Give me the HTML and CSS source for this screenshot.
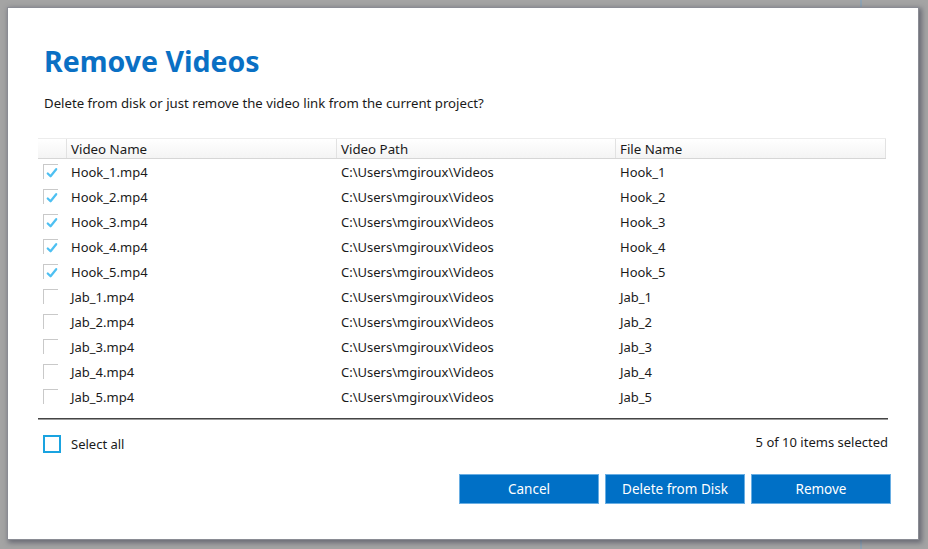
FILE: index.html
```html
<!DOCTYPE html>
<html>
<head>
<meta charset="utf-8">
<link rel="stylesheet" href="styles.css">
</head>
<body>
<div class="desk">
  <div class="guide"></div>
  <div class="dialog">
    <h1 class="title">Remove Videos</h1>
    <p class="subtitle">Delete from disk or just remove the video link from the current project?</p>
    <div class="grid">
      <div class="row head">
        <div class="cell chk"></div>
        <div class="cell">Video Name</div>
        <div class="cell">Video Path</div>
        <div class="cell">File Name</div>
      </div>
      <div class="row"><div class="cell chk"><span class="box on"><svg viewBox="0 0 16 16"><path d="M4 9 L7 12 L13 4.5"/></svg></span></div><div class="cell">Hook_1.mp4</div><div class="cell">C:\Users\mgiroux\Videos</div><div class="cell">Hook_1</div></div>
      <div class="row"><div class="cell chk"><span class="box on"><svg viewBox="0 0 16 16"><path d="M4 9 L7 12 L13 4.5"/></svg></span></div><div class="cell">Hook_2.mp4</div><div class="cell">C:\Users\mgiroux\Videos</div><div class="cell">Hook_2</div></div>
      <div class="row"><div class="cell chk"><span class="box on"><svg viewBox="0 0 16 16"><path d="M4 9 L7 12 L13 4.5"/></svg></span></div><div class="cell">Hook_3.mp4</div><div class="cell">C:\Users\mgiroux\Videos</div><div class="cell">Hook_3</div></div>
      <div class="row"><div class="cell chk"><span class="box on"><svg viewBox="0 0 16 16"><path d="M4 9 L7 12 L13 4.5"/></svg></span></div><div class="cell">Hook_4.mp4</div><div class="cell">C:\Users\mgiroux\Videos</div><div class="cell">Hook_4</div></div>
      <div class="row"><div class="cell chk"><span class="box on"><svg viewBox="0 0 16 16"><path d="M4 9 L7 12 L13 4.5"/></svg></span></div><div class="cell">Hook_5.mp4</div><div class="cell">C:\Users\mgiroux\Videos</div><div class="cell">Hook_5</div></div>
      <div class="row"><div class="cell chk"><span class="box"></span></div><div class="cell">Jab_1.mp4</div><div class="cell">C:\Users\mgiroux\Videos</div><div class="cell">Jab_1</div></div>
      <div class="row"><div class="cell chk"><span class="box"></span></div><div class="cell">Jab_2.mp4</div><div class="cell">C:\Users\mgiroux\Videos</div><div class="cell">Jab_2</div></div>
      <div class="row"><div class="cell chk"><span class="box"></span></div><div class="cell">Jab_3.mp4</div><div class="cell">C:\Users\mgiroux\Videos</div><div class="cell">Jab_3</div></div>
      <div class="row"><div class="cell chk"><span class="box"></span></div><div class="cell">Jab_4.mp4</div><div class="cell">C:\Users\mgiroux\Videos</div><div class="cell">Jab_4</div></div>
      <div class="row"><div class="cell chk"><span class="box"></span></div><div class="cell">Jab_5.mp4</div><div class="cell">C:\Users\mgiroux\Videos</div><div class="cell">Jab_5</div></div>
    </div>
    <div class="divider"></div>
    <div class="status">
      <label class="selall"><span class="bigbox"></span>Select all</label>
      <span class="count">5 of 10 items selected</span>
    </div>
    <div class="actions">
      <button class="btn">Cancel</button>
      <button class="btn">Delete from Disk</button>
      <button class="btn">Remove</button>
    </div>
  </div>
</div>
</body>
</html>
```
FILE: styles.css
```css
html, body {
  margin: 0;
  padding: 0;
}
body {
  background: #a4a4a4;
  font-family: "Noto Sans", "Open Sans", sans-serif;
  font-size: 13px;
  color: #1a1a1a;
  width: 928px;
  height: 549px;
  overflow: hidden;
}
.desk {
  position: relative;
  width: 928px;
  height: 549px;
  padding: 8px 0 0 8px;
  box-sizing: border-box;
}
.guide {
  position: absolute;
  left: 860px;
  top: 0;
  width: 2px;
  height: 549px;
  background: #8fa3b3;
}
.dialog {
  position: relative;
  width: 910px;
  height: 531px;
  background: #fff;
  box-sizing: border-box;
  padding: 0 30px;
  box-shadow: 0 0 0 1px #8a8c94, 2px 2px 5px 2px rgba(60, 62, 80, 0.55);
}
.title {
  margin: 0;
  padding: 36px 0 0 6px;
  font-size: 28.5px;
  line-height: 34px;
  font-weight: 700;
  color: #0a70c4;
}
.subtitle {
  margin: 16px 0 0 6px;
  line-height: 18px;
  font-size: 13.2px;
}
.grid {
  margin-top: 26px;
  width: 848px;
}
.row {
  display: grid;
  grid-template-columns: 29px 270px 279px 270px;
  height: 25px;
  align-items: center;
}
.row.head {
  height: 21px;
  border-top: 1px solid #ececec;
  border-bottom: 1px solid #d6d6d6;
  background: linear-gradient(#ffffff, #f4f4f4);
  box-sizing: border-box;
  align-items: stretch;
}
.head .cell {
  border-right: 1px solid #e2e2e2;
  display: flex;
  align-items: center;
  padding-left: 4px;
  padding-top: 1px;
  font-size: 13.3px;
}
.head .cell.chk {
  padding: 0;
}
.cell {
  padding-left: 4px;
  white-space: nowrap;
  padding-top: 0;
}
.cell.chk {
  padding-left: 5px;
  padding-top: 0;
  display: flex;
  align-items: center;
}
.box {
  width: 15px;
  height: 15px;
  border-top: 1px solid #c9c9c9;
  border-left: 1px solid #c9c9c9;
  box-sizing: border-box;
  display: block;
}
.box svg {
  width: 15px;
  height: 15px;
  display: block;
}
.box path {
  fill: none;
  stroke: #4ec0f2;
  stroke-width: 2.4;
  stroke-linecap: round;
  stroke-linejoin: round;
}
.divider {
  margin: 9px -2px 0 0;
  height: 1px;
  width: 850px;
  background: #454545;
  border-bottom: 1px solid #9a9a9a;
}
.status {
  display: flex;
  justify-content: space-between;
  align-items: center;
  margin-top: 15px;
  width: 850px;
}
.selall {
  display: flex;
  align-items: center;
  padding-left: 5px;
}
.bigbox {
  width: 18px;
  height: 18px;
  border: 2px solid #1aa3e0;
  box-sizing: border-box;
  margin-right: 10px;
}
.count {
  margin-top: -4px;
}
.actions {
  display: flex;
  justify-content: flex-end;
  gap: 6px;
  margin: 21px -3px 0 0;
}
.btn {
  width: 140px;
  height: 30px;
  background: #0070c6;
  border: 1px solid #69aee3;
  color: #fff;
  font-family: inherit;
  font-size: 13.5px;
  padding: 0;
}
```
